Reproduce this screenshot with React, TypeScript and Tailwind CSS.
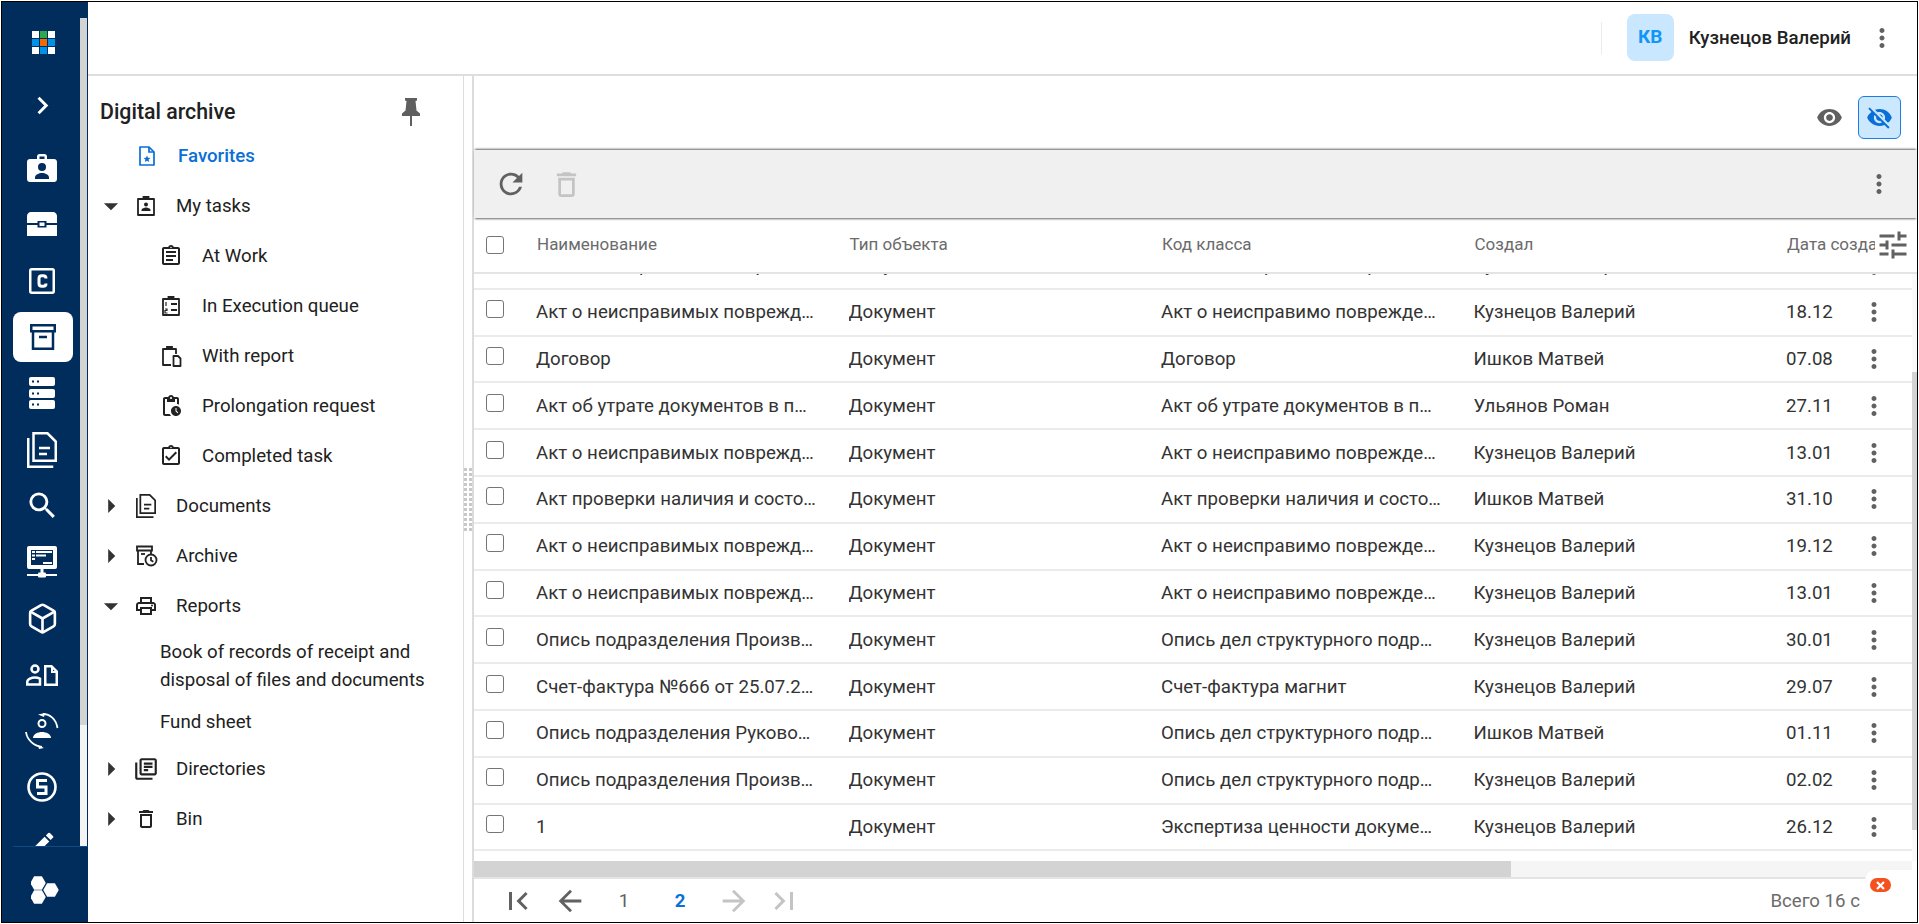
import { Box } from "lucide-react";
import type { ReactNode } from "react";
import {
  MdArrowBack,
  MdArrowDropDown,
  MdArrowForward,
  MdArrowRight,
  MdChevronRight,
  MdEdit,
  MdFirstPage,
  MdLastPage,
  MdMoreVert,
  MdOutlineAssignment,
  MdOutlineAssignmentTurnedIn,
  MdOutlineDelete,
  MdOutlineLibraryBooks,
  MdOutlinePendingActions,
  MdOutlinePrint,
  MdRefresh,
  MdSearch,
  MdTune,
  MdVisibility,
  MdVisibilityOff,
} from "react-icons/md";

const NAVY = "#002d5c";

const rows = [
  ["Акт о неисправимых поврежд…", "Акт о неисправимо поврежде…", "Кузнецов Валерий", "18.12"],
  ["Договор", "Договор", "Ишков Матвей", "07.08"],
  ["Акт об утрате документов в п…", "Акт об утрате документов в п…", "Ульянов Роман", "27.11"],
  ["Акт о неисправимых поврежд…", "Акт о неисправимо поврежде…", "Кузнецов Валерий", "13.01"],
  ["Акт проверки наличия и состо…", "Акт проверки наличия и состо…", "Ишков Матвей", "31.10"],
  ["Акт о неисправимых поврежд…", "Акт о неисправимо поврежде…", "Кузнецов Валерий", "19.12"],
  ["Акт о неисправимых поврежд…", "Акт о неисправимо поврежде…", "Кузнецов Валерий", "13.01"],
  ["Опись подразделения Произв…", "Опись дел структурного подр…", "Кузнецов Валерий", "30.01"],
  ["Счет-фактура №666 от 25.07.2…", "Счет-фактура магнит", "Кузнецов Валерий", "29.07"],
  ["Опись подразделения Руково…", "Опись дел структурного подр…", "Ишков Матвей", "01.11"],
  ["Опись подразделения Произв…", "Опись дел структурного подр…", "Кузнецов Валерий", "02.02"],
  ["1", "Экспертиза ценности докуме…", "Кузнецов Валерий", "26.12"],
];

function LogoGrid() {
  const colors = ["#fff", "#2ea84f", "#fff", "#0091ea", "#f26a00", "#0091ea", "#fff", "#0091ea", "#fff"];
  return (
    <div className="grid grid-cols-3 gap-[1px] w-[23px] h-[23px]">
      {colors.map((c, i) => (
        <span key={i} style={{ backgroundColor: c }} />
      ))}
    </div>
  );
}

function BadgeIcon() {
  return (
    <svg width="30" height="28" viewBox="0 0 30 28">
      <path fillRule="evenodd" fill="#fff" d="M10 5V2.500C10 1.100 11.100 0 12.500 0h5C18.900 0 20 1.100 20 2.500V5h7c1.700 0 3 1.300 3 3v17c0 1.700-1.300 3-3 3H3c-1.700 0-3-1.300-3-3V8c0-1.700 1.300-3 3-3zm2.500 0h5V2.500h-5z" />
      <circle cx="15" cy="13" r="4" fill={NAVY} />
      <path fill={NAVY} d="M8 25v-1.500C8 20.500 12 19 15 19s7 1.500 7 4.500V25z" />
    </svg>
  );
}

function ChestIcon() {
  return (
    <svg width="30" height="24" viewBox="0 0 30 24">
      <path fill="#fff" d="M4 0h22c2.200 0 4 1.800 4 4v7H19.500V9h-9v2H0V4c0-2.200 1.800-4 4-4zM0 13h10.500v2.500h9V13H30v11H0z" />
      <rect x="12.500" y="10.500" width="5" height="3.500" fill="#fff" />
    </svg>
  );
}

function ClassIcon() {
  return (
    <svg width="26" height="26" viewBox="0 0 26 26" fill="none" stroke="#fff">
      <rect x="1.250" y="1.250" width="23.500" height="23.500" rx="1.500" strokeWidth="2.500" />
      <path strokeWidth="3" d="M17 10.500c0-1.800-1-2.800-2.800-2.800h-1.400c-1.800 0-2.800 1-2.800 2.800v5c0 1.800 1 2.800 2.800 2.800h1.400c1.800 0 2.800-1 2.800-2.800" />
    </svg>
  );
}

function ArchiveIcon() {
  return (
    <svg width="26" height="26" viewBox="0 0 26 26" fill="none" stroke={NAVY} strokeWidth="2.500">
      <rect x="1.250" y="1.250" width="23.500" height="6" />
      <path d="M3 7v17.750h20V7M9 13h8" />
    </svg>
  );
}

function ServerIcon() {
  return (
    <svg width="26" height="32" viewBox="0 0 26 32">
      {[0, 12, 23].map((y) => (
        <g key={y}>
          <rect y={y} width="26" height="9" rx="2" fill="#fff" />
          <rect x="3" y={y + 3.5} width="2" height="2" fill={NAVY} />
          <rect x="8" y={y + 3.5} width="2" height="2" fill={NAVY} />
        </g>
      ))}
    </svg>
  );
}

function DocsIcon({ width, color, weight }: { width: number; color: string; weight: number }) {
  return (
    <svg width={width} height={(width * 36) / 30} viewBox="0 0 30 36" fill="none" stroke={color} strokeWidth={weight} className="shrink-0">
      <path d="M6.500 1.250h14l8.250 8.250v19.250h-22.250z" />
      <path d="M1.250 6v28.750h25" />
      <path d="M12 16h11M12 22h8" />
    </svg>
  );
}

function MonitorIcon() {
  return (
    <svg width="30" height="32" viewBox="0 0 30 32">
      <rect width="30" height="23" rx="2" fill="#fff" />
      <rect x="4" y="4" width="22" height="15" fill={NAVY} />
      <rect x="5" y="5" width="3" height="2" fill="#fff" />
      <rect x="9" y="5" width="16" height="2" fill="#fff" />
      <rect x="5" y="8.500" width="3" height="2" fill="#fff" />
      <rect x="9" y="8.500" width="10" height="2" fill="#fff" />
      <rect x="5" y="12" width="3" height="2" fill="#fff" />
      <rect x="16" y="16" width="9" height="2" fill="#fff" />
      <rect x="13.500" y="23" width="3" height="5" fill="#fff" />
      <rect y="28" width="30" height="2" fill="#fff" />
      <rect x="11" y="26.500" width="8" height="5" rx="1" fill="#fff" />
    </svg>
  );
}

function PersonDocIcon() {
  return (
    <svg width="32" height="22" viewBox="0 0 32 22" fill="none" stroke="#fff" strokeWidth="2.500">
      <circle cx="9" cy="5" r="3.500" />
      <path d="M1.250 20.500v-2.500c0-3 4.500-4.500 7.750-4.500 1.500 0 3.500.5 5 1.200v5.800z" />
      <path fill="#fff" stroke="none" d="M18 1h8l6 6v15H18z" />
      <path fill={NAVY} stroke="none" d="M20.500 3.500h4.500l4.500 4.500v11.500h-9z" />
      <path fill="#fff" stroke="none" d="M25 2h2v5h4v2h-6z" />
    </svg>
  );
}

function RotatePersonIcon() {
  return (
    <svg width="34" height="36" viewBox="0 0 34 36" fill="none" stroke="#fff" strokeWidth="1.800">
      <circle cx="17" cy="10.500" r="3.500" strokeWidth="2" />
      <path fill="#fff" stroke="none" d="M8 25c0-4 5-6 9-6s9 2 9 6z" />
      <path d="M18 1c7 0 13 5 14.500 14" />
      <path d="M1 19c1 8 8 14 16 15" />
      <path fill="#fff" stroke="none" d="M13 1.500 20 0l-1 4zM13 32l6 3-5 1z" />
    </svg>
  );
}

function FiveIcon() {
  return (
    <svg width="30" height="30" viewBox="0 0 30 30" fill="none" stroke="#fff">
      <circle cx="15" cy="15" r="13.500" strokeWidth="2.600" />
      <path strokeWidth="3" d="M20 8.500h-9.500v6.500H19v6.500h-9" />
    </svg>
  );
}

function HexIcon() {
  const hex = "M0 -9.500 8.200 -4.750V4.750L0 9.500-8.200 4.750V-4.750z";
  return (
    <svg width="28" height="28" viewBox="0 0 28 28" fill="#fff">
      <path d={hex} transform="translate(7 7) rotate(30) scale(.82)" />
      <path d={hex} transform="translate(20 14) rotate(30) scale(.82)" />
      <path d={hex} transform="translate(7 21) rotate(30) scale(.82)" />
    </svg>
  );
}

function PinIcon() {
  return (
    <svg width="18" height="28" viewBox="0 0 18 28" fill="#5f5f5f">
      <path d="M3 0h12v2.500l-1.500.5 1 9.500L18 15.500V18H10v10H8V18H0v-2.500l3.500-3 1-9.500L3 2.500z" />
    </svg>
  );
}

function NavCell({ children }: { children: ReactNode }) {
  return <div className="h-[56.3px] shrink-0 flex items-center justify-center">{children}</div>;
}

function Sidebar() {
  return (
    <aside className="w-[86px] shrink-0 flex flex-col" style={{ backgroundColor: NAVY }}>
      <div className="flex-1 min-h-0 flex overflow-hidden">
        <div className="w-[78px] shrink-0 pl-[2px] flex flex-col items-stretch overflow-hidden">
          <div className="pt-[29px] flex justify-center shrink-0 pl-[2px]"><LogoGrid /></div>
          <div className="h-[50px] mt-[26px] flex items-center justify-center shrink-0">
            <MdChevronRight className="text-white w-[35px] h-[35px]" />
          </div>
          <div className="mt-[10px]" />
          <NavCell><BadgeIcon /></NavCell>
          <NavCell><ChestIcon /></NavCell>
          <NavCell><ClassIcon /></NavCell>
          <NavCell>
            <div className="w-[60px] h-[50px] ml-[1px] bg-white rounded-lg flex items-center justify-center"><ArchiveIcon /></div>
          </NavCell>
          <NavCell><ServerIcon /></NavCell>
          <NavCell><DocsIcon width={30} color="#fff" weight={2.5} /></NavCell>
          <NavCell><MdSearch className="text-white w-[35px] h-[35px]" /></NavCell>
          <NavCell><MonitorIcon /></NavCell>
          <NavCell><Box className="text-white w-[33px] h-[33px]" strokeWidth={1.9} /></NavCell>
          <NavCell><PersonDocIcon /></NavCell>
          <NavCell><RotatePersonIcon /></NavCell>
          <NavCell><FiveIcon /></NavCell>
          <NavCell><MdEdit className="text-white w-[30px] h-[30px]" /></NavCell>
        </div>
        <div className="w-[7px] bg-[#f4f4f4] mt-[16px]">
          <div className="h-[707px] bg-[#d3d3d3]" />
        </div>
      </div>
      <div className="h-[76px] shrink-0 ml-[11px] border-t border-[#0f4a85] flex justify-center pt-[29px] pr-[11px]">
        <HexIcon />
      </div>
    </aside>
  );
}

function TreeRow({ open, icon, label }: { open?: boolean; icon: ReactNode; label: string }) {
  return (
    <div className="h-[50px] flex items-center">
      <span className="w-[33px] ml-[6px] flex justify-center text-[#333]">
        {open ? <MdArrowDropDown className="w-[34px] h-[34px] shrink-0" /> : <MdArrowRight className="w-[34px] h-[34px] shrink-0" />}
      </span>
      <span className="w-[24px] ml-[7px] flex justify-center text-[#222]">{icon}</span>
      <span className="ml-[18px] text-[18.67px] text-[#212121]">{label}</span>
    </div>
  );
}

function ChildRow({ icon, label }: { icon: ReactNode; label: string }) {
  return (
    <div className="h-[50px] flex items-center pl-[71px]">
      <span className="w-[24px] flex justify-center text-[#222]">{icon}</span>
      <span className="ml-[19px] text-[18.67px] text-[#212121]">{label}</span>
    </div>
  );
}

function FavIcon() {
  return (
    <svg width="22" height="22" viewBox="0 0 22 22" fill="none" stroke="#0a6fd6" strokeWidth="1.700">
      <path d="M4 2h9l5 5v13H4z" strokeLinejoin="round" />
      <path d="M13 2v5h5" />
      <path fill="#0a6fd6" stroke="none" d="m11 10.500 1 2.300 2.500.2-1.900 1.600.6 2.400-2.200-1.300-2.200 1.300.6-2.400-1.900-1.600 2.500-.2z" />
    </svg>
  );
}

function BadgeOutlineIcon() {
  return (
    <svg width="22" height="22" viewBox="0 0 22 22" fill="none" stroke="#222" strokeWidth="1.800">
      <path d="M3 4h16v16H3z" strokeLinejoin="round" />
      <path d="M8.500 4V2h5v2" />
      <circle cx="11" cy="9.500" r="2" fill="#222" stroke="none" />
      <path fill="#222" stroke="none" d="M6.500 16v-1c0-1.500 3-2.500 4.500-2.500s4.500 1 4.500 2.500v1z" />
    </svg>
  );
}

function QueueIcon() {
  return (
    <svg width="22" height="22" viewBox="0 0 22 22" fill="none" stroke="#222" strokeWidth="1.800">
      <path d="M3 4h16v16H3z" strokeLinejoin="round" />
      <path d="M8.500 4V2h5v2" />
      <path d="M11 9h6M11 15h6" />
      <path strokeWidth="1.200" d="M6 7v4M5 14h2v1.500H5V18h2.500" />
    </svg>
  );
}

function ReportClipIcon() {
  return (
    <svg width="22" height="22" viewBox="0 0 22 22" fill="none" stroke="#222" strokeWidth="1.800">
      <path d="M11 20H3V4h13v5" strokeLinejoin="round" />
      <path d="M7 4V2h5v2" />
      <path d="M14 11h4l2.500 2.500V21H13.500V11z" strokeLinejoin="round" />
    </svg>
  );
}

function ArchiveClockIcon() {
  return (
    <svg width="24" height="22" viewBox="0 0 24 22" fill="none" stroke="#222" strokeWidth="1.800" className="shrink-0">
      <path d="M3 1.500h15v4H3zM4 5.500V19h6M17 5.500V9" />
      <path d="M7 9h4" />
      <circle cx="17" cy="15" r="5.500" />
      <path d="M17 12v3.300l2.300 1.500" />
    </svg>
  );
}

function Tree() {
  return (
    <section className="w-[376px] shrink-0 border-r border-[#dcdcdc] pt-[16px] font-['Roboto',sans-serif]">
      <div className="flex items-center justify-between h-[40px] pl-[12px] pr-[43px]">
        <span className="text-[21.33px] font-medium text-[#212121]">Digital archive</span>
        <PinIcon />
      </div>
      <div className="h-[50px] -mt-[1px] flex items-center pl-[47px]">
        <span className="w-[24px] flex justify-center"><FavIcon /></span>
        <span className="ml-[19px] text-[18.67px] font-medium text-[#0a6fd6]">Favorites</span>
      </div>
      <TreeRow open icon={<BadgeOutlineIcon />} label="My tasks" />
      <ChildRow icon={<MdOutlineAssignment className="w-[24px] h-[24px]" />} label="At Work" />
      <ChildRow icon={<QueueIcon />} label="In Execution queue" />
      <ChildRow icon={<ReportClipIcon />} label="With report" />
      <ChildRow icon={<MdOutlinePendingActions className="w-[24px] h-[24px]" />} label="Prolongation request" />
      <ChildRow icon={<MdOutlineAssignmentTurnedIn className="w-[24px] h-[24px]" />} label="Completed task" />
      <TreeRow icon={<DocsIcon width={20} color="#222" weight={2.6} />} label="Documents" />
      <TreeRow icon={<ArchiveClockIcon />} label="Archive" />
      <TreeRow open icon={<MdOutlinePrint className="w-[24px] h-[24px]" />} label="Reports" />
      <div className="pl-[72px] pr-[10px] mt-[7px] text-[18.67px] leading-[28px] text-[#212121] whitespace-nowrap">
        <div>Book of records of receipt and</div>
        <div>disposal of files and documents</div>
        <div className="mt-[14px]">Fund sheet</div>
      </div>
      <div className="mt-[8px]">
        <TreeRow icon={<MdOutlineLibraryBooks className="w-[26px] h-[26px] shrink-0" />} label="Directories" />
        <TreeRow icon={<MdOutlineDelete className="w-[24px] h-[24px] shrink-0" />} label="Bin" />
      </div>
    </section>
  );
}

function DragHandle() {
  return (
    <div className="w-[8px] shrink-0 flex items-center">
      <div className="grid grid-cols-2 gap-[2px] w-[8px]">
        {Array.from({ length: 26 }).map((_, i) => (
          <span key={i} className="w-[3px] h-[3px] bg-[#c8c8c8]" />
        ))}
      </div>
    </div>
  );
}

function Checkbox() {
  return <span className="block w-[18px] h-[18px] rounded-[3px] border-[1.5px] border-[#757575] bg-white" />;
}

const colClass = "w-[312.5px] shrink-0 truncate";

function TableRow({ row }: { row: string[] }) {
  return (
    <div className="h-[46.8px] flex items-center border-b-2 border-[#ebebeb] text-[18.67px] text-[#333] shrink-0">
      <span className="w-[62px] pl-[12px] shrink-0 -mt-[6px]"><Checkbox /></span>
      <span className={colClass}>{row[0]}</span>
      <span className={colClass}>Документ</span>
      <span className={colClass}>{row[1]}</span>
      <span className={colClass}>{row[2]}</span>
      <span className="w-[68px] shrink-0">{row[3]}</span>
      <MdMoreVert className="w-[30px] h-[30px] text-[#616161] ml-[5px] shrink-0" />
    </div>
  );
}

function Main() {
  return (
    <section className="flex-1 min-w-0 border-l-2 border-[#dcdcdc] flex flex-col font-['Roboto',sans-serif] relative">
      <div className="h-[74px] shrink-0 flex items-center justify-end pr-[16px] gap-[15px] pt-[9px]">
        <MdVisibility className="w-[27px] h-[27px] text-[#616161]" />
        <span className="w-[43px] h-[43px] rounded-md border border-[#1a7fe0] bg-[#cce8ff] flex items-center justify-center">
          <MdVisibilityOff className="w-[27px] h-[27px] text-[#0a6fd6]" />
        </span>
      </div>
      <div className="h-[68px] shrink-0 bg-[#f0f0f0] shadow-[0_2px_2px_-1px_rgba(0,0,0,0.6),0_-2px_2px_-1px_rgba(0,0,0,0.6)] z-10 flex items-center pl-[20px] pr-[23px] relative">
        <MdRefresh className="w-[34px] h-[34px] text-[#616161]" />
        <MdOutlineDelete className="w-[33px] h-[33px] text-[#c4c4c4] ml-[22px]" />
        <MdMoreVert className="w-[30px] h-[30px] text-[#616161] ml-auto" />
      </div>
      <div className="h-[56px] shrink-0 flex items-center border-b-2 border-[#e4e4e4] text-[17px] text-[#6b6b6b] relative overflow-hidden">
        <span className="w-[63px] pl-[12px] shrink-0"><Checkbox /></span>
        <span className="w-[312.5px] shrink-0">Наименование</span>
        <span className="w-[312.5px] shrink-0">Тип объекта</span>
        <span className="w-[312.5px] shrink-0">Код класса</span>
        <span className="w-[312.5px] shrink-0">Создал</span>
        <span className="whitespace-nowrap">Дата создания</span>
        <span className="absolute right-[6px] top-0 bottom-0 w-[36px] bg-white flex items-center justify-center">
          <MdTune className="w-[36px] h-[36px] text-[#616161] shrink-0" />
        </span>
      </div>
      <div className="flex-1 min-h-0 flex overflow-hidden">
        <div className="flex-1 min-w-0 overflow-hidden flex flex-col">
          <div className="-mt-[31px]">
            <TableRow row={rows[0]} />
            {rows.map((row, i) => (
              <TableRow key={i} row={row} />
            ))}
          </div>
        </div>
        <div className="w-[5px] shrink-0 bg-[#fafafa]">
          <div className="mt-[98px] h-[458px] bg-[#d3d3d3]" />
        </div>
      </div>
      <div className="h-[16px] shrink-0 bg-[#f5f5f5] mr-[5px]">
        <div className="h-full w-[1037px] bg-[#d3d3d3]" />
      </div>
      <div className="h-[45px] shrink-0 border-t-2 border-[#e4e4e4] flex items-center text-[18.67px] pl-[18px]">
        <span className="w-[52px] flex justify-center"><MdFirstPage className="w-[36px] h-[36px] text-[#616161]" /></span>
        <span className="w-[52px] flex justify-center"><MdArrowBack className="w-[34px] h-[34px] text-[#616161]" /></span>
        <span className="w-[52px] ml-[2px] text-center text-[#616161]">1</span>
        <span className="w-[52px] ml-[4px] text-center font-bold text-[#0a6fd6]">2</span>
        <span className="w-[52px] ml-[2px] flex justify-center"><MdArrowForward className="w-[34px] h-[34px] text-[#c4c4c4]" /></span>
        <span className="w-[52px] -ml-[2px] flex justify-center"><MdLastPage className="w-[36px] h-[36px] text-[#c4c4c4]" /></span>
        <span className="ml-auto mr-[57px] text-[#6b6b6b]">Всего 16 с</span>
      </div>
      <span className="absolute right-0 bottom-[42px] w-[52px] h-[10px] rounded-tl-xl bg-white" />
      <span className="absolute right-[26px] bottom-[30px] w-[21px] h-[14px] rounded-full bg-[#f4511e] text-white flex items-center justify-center">
        <svg width="9" height="9" viewBox="0 0 9 9" stroke="#fff" strokeWidth="2.200"><path d="m1 1 7 7M8 1 1 8" /></svg>
      </span>
    </section>
  );
}

function Header() {
  return (
    <header className="h-[74px] shrink-0 border-b-2 border-[#dedede] flex items-center justify-end font-['Roboto',sans-serif] pr-[20px] pb-[1px]">
      <span className="w-px h-[32px] bg-[#ececec] mr-[25px]" />
      <span className="w-[47px] h-[47px] rounded-lg bg-[#c9e7ff] text-[#1296f5] font-bold text-[19px] flex items-center justify-center">КВ</span>
      <span className="ml-[15px] text-[18.67px] font-medium text-[#212121]">Кузнецов Валерий</span>
      <MdMoreVert className="w-[30px] h-[30px] text-[#616161] ml-[16px]" />
    </header>
  );
}

export default function App() {
  return (
    <div className="h-screen w-full bg-white overflow-hidden p-px">
      <div className="h-full border border-black flex overflow-hidden">
        <Sidebar />
        <div className="flex-1 min-w-0 flex flex-col">
          <Header />
          <div className="flex-1 min-h-0 flex">
            <Tree />
            <DragHandle />
            <Main />
          </div>
        </div>
      </div>
    </div>
  );
}
